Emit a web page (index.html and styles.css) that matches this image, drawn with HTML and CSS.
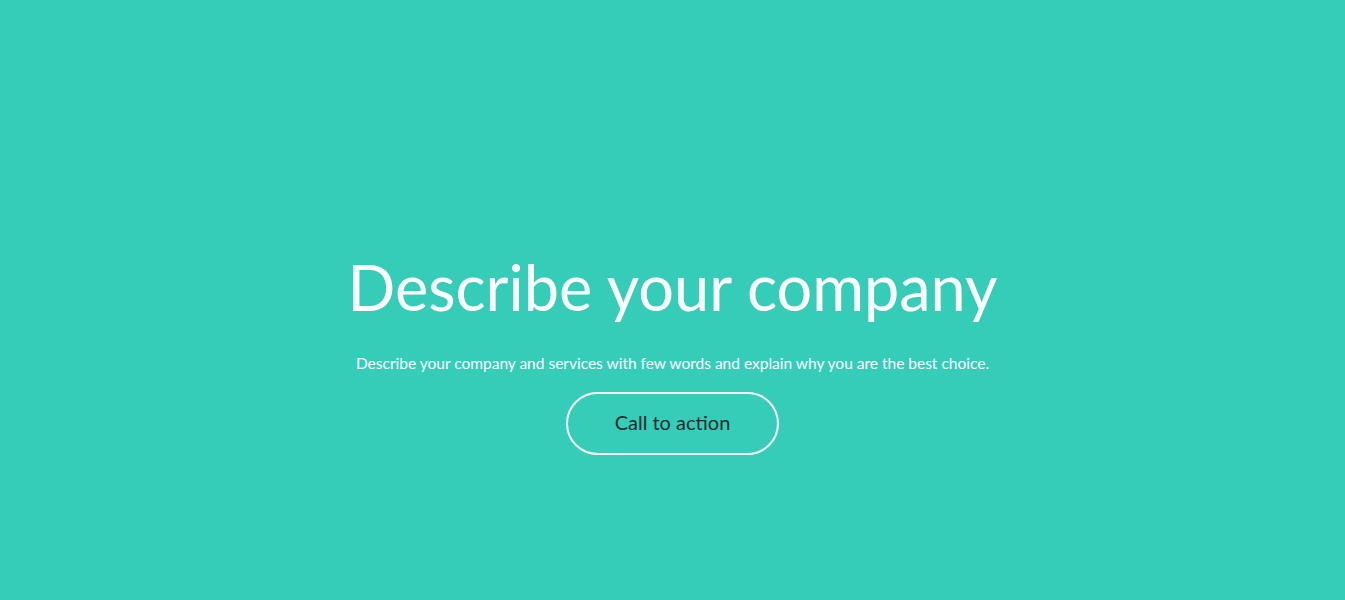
FILE: index.html
```html
<!DOCTYPE html>
<html lang="en">
<head>
<meta charset="utf-8">
<title>Describe your company</title>
<link rel="stylesheet" href="styles.css">
</head>
<body>
<section class="hero">
  <h1 class="hero-title">Describe your company</h1>
  <p class="hero-text">Describe your company and services with few words and explain why you are the best choice.</p>
  <a class="hero-btn" href="#">Call to action</a>
</section>
</body>
</html>
```

FILE: styles.css
```css
html, body {
  margin: 0;
  padding: 0;
}
body {
  background: #35cdb8;
  font-family: Lato, "Open Sans", sans-serif;
}
.hero {
  height: 600px;
  display: flex;
  flex-direction: column;
  align-items: center;
  justify-content: flex-start;
  color: #fff;
  text-align: center;
  padding-top: 255px;
  box-sizing: border-box;
}
.hero-title {
  margin: 0;
  font-weight: 400;
  font-size: 63px;
  line-height: 63px;
}
.hero-text {
  margin: 35px 0 0;
  font-size: 15.5px;
  font-weight: 400;
  line-height: 20px;
}
.hero-btn {
  margin-top: 19px;
  display: flex;
  align-items: center;
  justify-content: center;
  width: 213px;
  height: 63px;
  padding-bottom: 4px;
  box-sizing: border-box;
  border: 2px solid #fff;
  border-radius: 32px;
  color: #1f2b2e;
  font-size: 20px;
  font-weight: 400;
  text-decoration: none;
}
```
